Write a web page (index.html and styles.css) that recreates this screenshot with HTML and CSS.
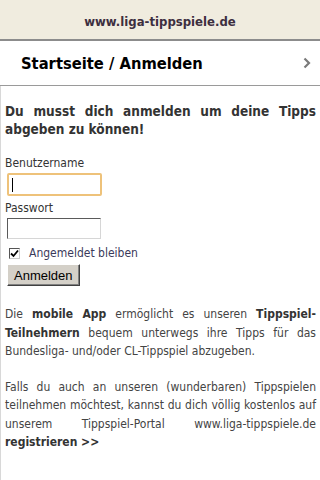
FILE: index.html
```html
<!DOCTYPE html>
<html lang="de">
<head>
<meta charset="utf-8">
<link rel="stylesheet" href="styles.css">
</head>
<body>
<header class="top">www.liga-tippspiele.de</header>
<nav class="navrow">
  <span class="navtitle">Startseite / Anmelden</span>
  <svg class="chev" width="8" height="12" viewBox="0 0 8 12"><path d="M1.5 1.5 L6 6 L1.5 10.5" fill="none" stroke="#7a7a7a" stroke-width="2.2"/></svg>
</nav>
<main class="content">
  <h1 class="notice">Du musst dich anmelden um deine Tipps abgeben zu können!</h1>
  <form class="login">
    <label class="lbl" for="u">Benutzername</label>
    <span class="field focused"><input id="u" type="text" class="inp"><span class="caret"></span></span>
    <label class="lbl" for="p">Passwort</label>
    <span class="field"><input id="p" type="password" class="inp"></span>
    <div class="remember">
      <span class="cb"><svg width="9" height="9" viewBox="0 0 9 9"><path d="M1 4.5 L3.5 7 L8 1.5" fill="none" stroke="#000" stroke-width="1.8"/></svg></span>
      <span class="cblbl">Angemeldet bleiben</span>
    </div>
    <button type="button" class="btn">Anmelden</button>
  </form>
  <p class="txt">Die <b>mobile App</b> ermöglicht es unseren <b>Tippspiel-Teilnehmern</b> bequem unterwegs ihre Tipps für das Bundesliga- und/oder CL-Tippspiel abzugeben.</p>
  <p class="txt">Falls du auch an unseren (wunderbaren) Tippspielen teilnehmen möchtest, kannst du dich völlig kostenlos auf unserem Tippspiel-Portal www.liga-tippspiele.de <b class="reg">registrieren &gt;&gt;</b></p>
</main>
</body>
</html>
```
FILE: styles.css
```css
html, body { margin: 0; padding: 0; background: #fff; }
body { font-family: "DejaVu Sans Condensed", "DejaVu Sans", sans-serif; width: 320px; height: 480px; overflow: hidden; }
.top {
  height: 41px; background: #f0ecdf; color: #3d2f3f;
  font-weight: bold; font-size: 13px; display: flex; align-items: center; justify-content: center;
  border-bottom: 2px solid #8c8c8c; box-sizing: border-box; padding-top: 4px;
}
.navrow {
  height: 45px; box-sizing: border-box; border-bottom: 1px solid #9a9a9a;
  display: flex; align-items: center; justify-content: space-between;
  padding: 0 9px 0 21px;
}
.navtitle { font-weight: bold; font-size: 16.4px; color: #000; }
.content {
  border-left: 1px solid #d8d8d8; padding: 0 4px 0 4px; height: 394px; box-sizing: border-box; overflow: hidden;
}
.notice {
  margin: 0; padding-top: 16px; font-size: 13.5px; font-weight: bold; color: #333;
  text-align: justify; line-height: 18px;
}
.login { margin-top: 18px; display: flex; flex-direction: column; align-items: flex-start; }
.lbl { font-size: 12px; color: #333; line-height: 15px; }
.field {
  display: block; margin: 2px 0 7px 2px; width: 94px; height: 21px; box-sizing: border-box; position: relative;
  border: 1px solid; border-color: #5a5a5a #d6d6d6 #d6d6d6 #5a5a5a; background: #fff;
}
.field.focused { border: 2px solid #eec27a; border-radius: 2px; width: 95px; height: 23px; margin-bottom: 5px; }
.caret { position: absolute; left: 3px; top: 3px; width: 1px; height: 14px; background: #000; }
.inp { border: 0; outline: none; width: 100%; height: 100%; padding: 0; background: transparent; }
.remember { display: flex; align-items: center; margin: 0 0 4px 4px; height: 14px; }
.cb {
  width: 11px; height: 11px; box-sizing: border-box; border: 1px solid; border-color: #555 #ccc #ccc #555;
  background: #fff; display: flex; align-items: center; justify-content: center;
}
.cblbl { font-size: 12px; color: #3a3a5a; margin-left: 9px; }
.btn {
  margin-left: 2px; font-family: "Liberation Sans", Arial, sans-serif; font-size: 13px; color: #000;
  background: #d4d0c8; height: 22px; padding: 0 6px; border: 1px solid; border-color: #fff #404040 #404040 #fff;
  box-shadow: inset -1px -1px 0 #808080;
}
.txt {
  font-size: 12px; color: #444; text-align: justify; line-height: 18.5px; margin: 19px 0 0 0;
}
.txt b { color: #333; }
.txt + .txt { margin-top: 17px; }
```
